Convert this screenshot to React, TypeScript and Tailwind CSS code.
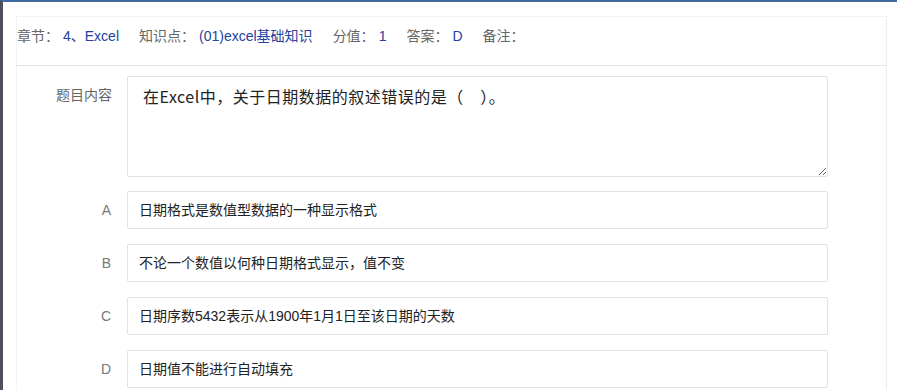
const options = [
  { key: "A", text: "日期格式是数值型数据的一种显示格式" },
  { key: "B", text: "不论一个数值以何种日期格式显示，值不变" },
  { key: "C", text: "日期序数5432表示从1900年1月1日至该日期的天数" },
  { key: "D", text: "日期值不能进行自动填充" },
];

const meta = [
  { label: "章节：", value: "4、Excel" },
  { label: "知识点：", value: "(01)excel基础知识" },
  { label: "分值：", value: "1" },
  { label: "答案：", value: "D" },
  { label: "备注：", value: "" },
];

export default function App() {
  return (
    <div
      className="w-[897px] h-[390px] overflow-hidden bg-white border-t-2 border-t-[#3e6a9e] border-l-[3px] border-l-[#4b505c]"
      style={{ fontFamily: '"Liberation Sans", "Noto Sans CJK SC", sans-serif' }}
    >
      <div className="ml-[13px] mt-[14px] w-[871px] h-[400px] border border-[#f3f3f3] border-r-[#eeeeee]">
        {/* header */}
        <div className="flex items-center pt-[11px] pb-[21px] mx-[-1px] pl-[1px] border-b border-[#e5e5e5] text-[14px] leading-[16px]">
          {meta.map((m, i) => (
            <div key={m.label} className={`flex ${i > 0 ? "ml-[20px]" : ""}`}>
              <span className="text-[#666666]">{m.label}</span>
              <span className="ml-[4px] text-[#2343a0]">{m.value}</span>
            </div>
          ))}
        </div>

        {/* body */}
        <div className="pt-[10px]">
          <div className="flex">
            <div className="w-[110px] pr-[15px] pt-[10px] text-right text-[14px] leading-[18px] text-[#666666]">
              题目内容
            </div>
            <textarea
              readOnly
              defaultValue="在Excel中，关于日期数据的叙述错误的是（　）。"
              className="w-[701px] h-[101px] rounded-[2px] border border-[#e2e2e2] px-[15px] pt-[8px] text-[16px] leading-[22px] tracking-[0.5px] text-[#222222] outline-none"
              style={{ fontFamily: '"Noto Sans CJK SC", sans-serif' }}
            />
          </div>

          <div className="mt-[14px] flex flex-col gap-[15px]">
            {options.map((o) => (
              <div key={o.key} className="flex">
                <div className="w-[110px] pr-[16px] flex items-center justify-end text-[14px] text-[#777777]">
                  {o.key}
                </div>
                <div className="w-[701px] h-[38px] rounded-[2px] border border-[#e2e2e2] px-[11px] flex items-center text-[14px] text-[#222222]">
                  {o.text}
                </div>
              </div>
            ))}
          </div>
        </div>
      </div>
    </div>
  );
}
